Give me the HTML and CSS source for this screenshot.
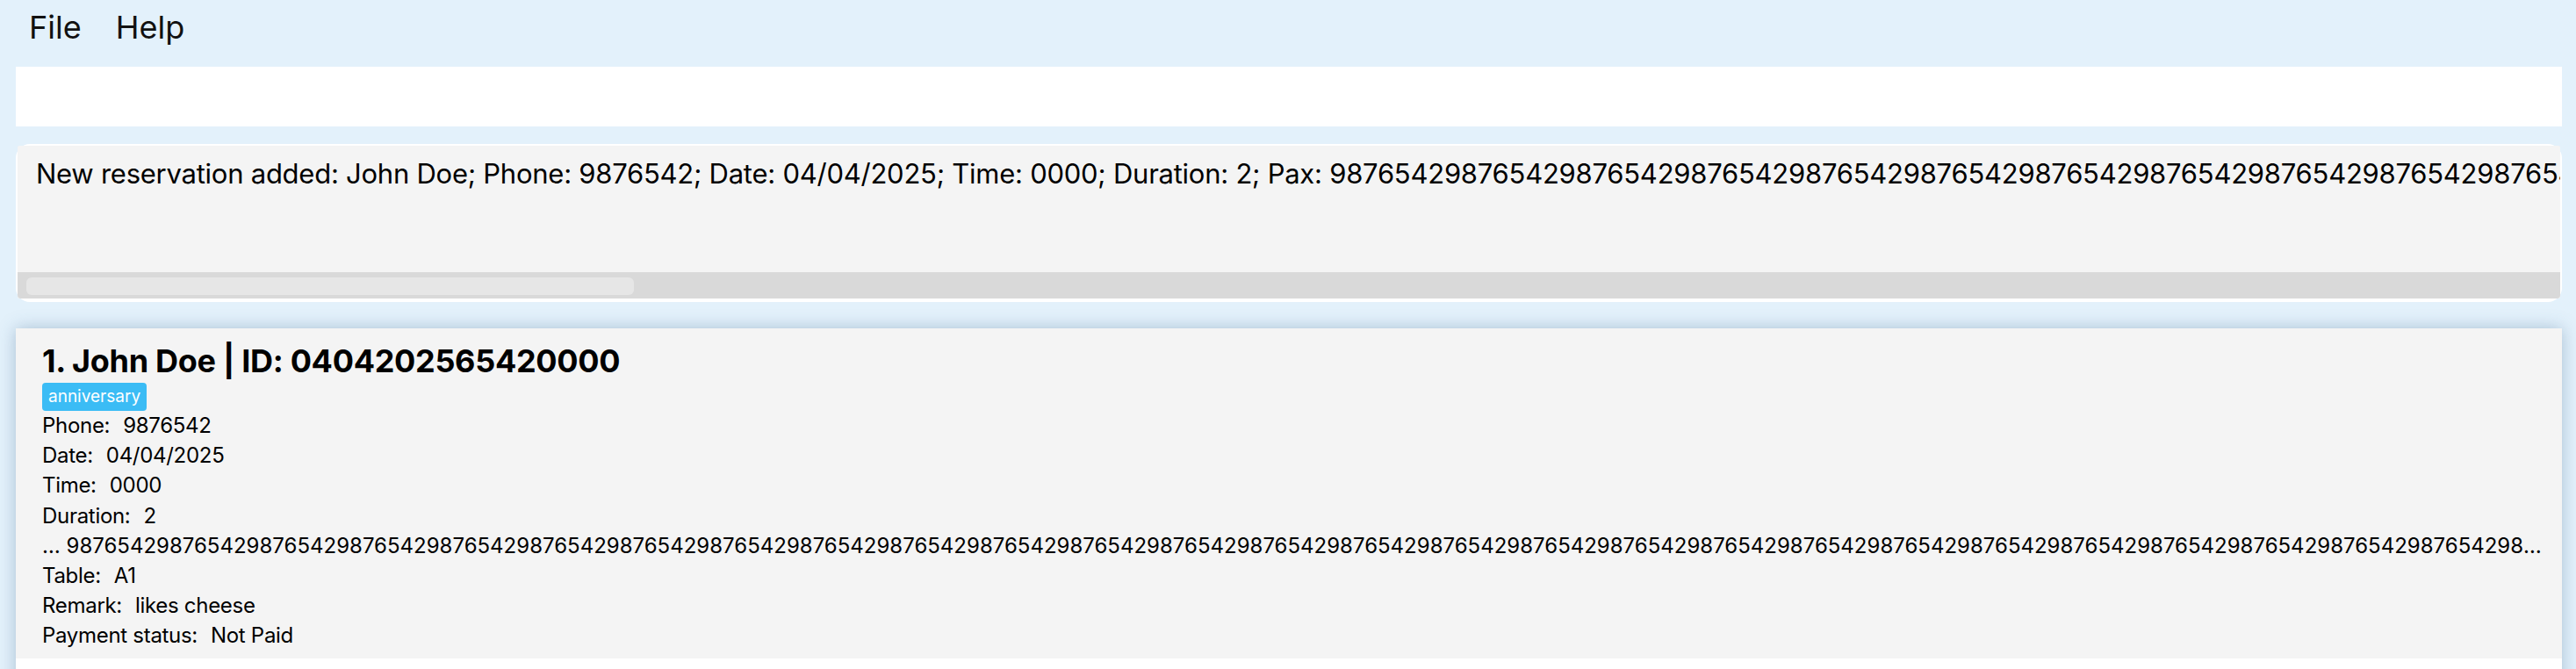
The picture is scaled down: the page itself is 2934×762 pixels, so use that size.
FILE: index.html
```html
<!DOCTYPE html>
<html>
<head>
<meta charset="utf-8">
<link rel="stylesheet" href="styles.css">
</head>
<body>
<div class="app">
  <nav class="menubar">
    <span class="menu-item">File</span>
    <span class="menu-item">Help</span>
  </nav>
  <div class="content">
    <div class="command-box"></div>
    <div class="result-box">
      <div class="result-inner">
        <div class="result-text">New reservation added: John Doe; Phone: 9876542; Date: 04/04/2025; Time: 0000; Duration: 2; Pax: 987654298765429876542987654298765429876542987654298765429876542987654298765429876542987654298765429876542987654298765429876542987654298765429876542987654298765429876542987654298765429876542987654298765429876542</div>
        <div class="scroll-track"><div class="scroll-thumb"></div></div>
      </div>
    </div>
    <div class="list-panel">
      <div class="card">
        <div class="card-title">1. John Doe | ID: 0404202565420000</div>
        <div class="tags"><span class="tag">anniversary</span></div>
        <div class="field"><span class="label">Phone:</span><span class="value">9876542</span></div>
        <div class="field"><span class="label">Date:</span><span class="value">04/04/2025</span></div>
        <div class="field"><span class="label">Time:</span><span class="value">0000</span></div>
        <div class="field"><span class="label">Duration:</span><span class="value">2</span></div>
        <div class="field pax">… 987654298765429876542987654298765429876542987654298765429876542987654298765429876542987654298765429876542987654298765429876542987654298765429876542987654298765429876542987654298765429876542987654298765429876542987654298765429876542987654298765429876542987654298765429876542</div>
        <div class="field"><span class="label">Table:</span><span class="value">A1</span></div>
        <div class="field"><span class="label">Remark:</span><span class="value">likes cheese</span></div>
        <div class="field"><span class="label">Payment status:</span><span class="value">Not Paid</span></div>
      </div>
    </div>
  </div>
</div>
</body>
</html>
```

FILE: styles.css
```css
html, body {
  margin: 0;
  padding: 0;
}

body {
  background: #e3f1fb;
  font-family: Inter, "Noto Sans", "Liberation Sans", sans-serif;
  color: #000;
  width: 2934px;
  height: 762px;
  overflow: hidden;
}

.menubar {
  display: flex;
  gap: 39px;
  padding-left: 33px;
  height: 63px;
  line-height: 63px;
  font-size: 36px;
  color: #111;
}

.content {
  padding: 13px 16px 0 18px;
}

.command-box {
  height: 68px;
  background: #fff;
}

.result-box {
  margin-top: 20px;
  background: #fff;
  border-radius: 16px;
  padding: 2px 2px 4px 2px;
}

.result-inner {
  background: #f4f4f4;
  border-radius: 2px;
  overflow: hidden;
}

.result-text {
  height: 144px;
  box-sizing: border-box;
  padding: 12px 0 0 21px;
  font-size: 31px;
  letter-spacing: -0.25px;
  line-height: 40px;
  white-space: nowrap;
  overflow: hidden;
}

.scroll-track {
  height: 30px;
  background: #d9d9d9;
  padding: 6px 0 0 10px;
  box-sizing: border-box;
  border-radius: 0 0 4px 4px;
}

.scroll-thumb {
  width: 692px;
  height: 20px;
  background: #e6e6e6;
  border-radius: 6px;
}

.list-panel {
  margin-top: 30px;
  background: #fff;
  height: 420px;
  box-shadow: 0 0 18px rgba(60, 100, 140, 0.35);
}

.card {
  background: #f4f4f4;
  height: 376px;
  box-sizing: border-box;
  padding: 17px 15px 0 30px;
}

.card-title {
  font-size: 36px;
  font-weight: 700;
  line-height: 40px;
  letter-spacing: -0.3px;
}

.tags {
  display: flex;
  margin-top: 5px;
}

.tag {
  background: #3bbcf5;
  color: #fff;
  font-size: 19px;
  height: 32px;
  line-height: 31px;
  padding: 0 7px;
  border-radius: 4px;
}

.field {
  display: flex;
  gap: 15px;
  font-size: 24px;
  letter-spacing: -0.3px;
  line-height: 34.2px;
  white-space: nowrap;
}

.field.pax {
  display: block;
  letter-spacing: 0;
  overflow: hidden;
  text-overflow: ellipsis;
}
```
